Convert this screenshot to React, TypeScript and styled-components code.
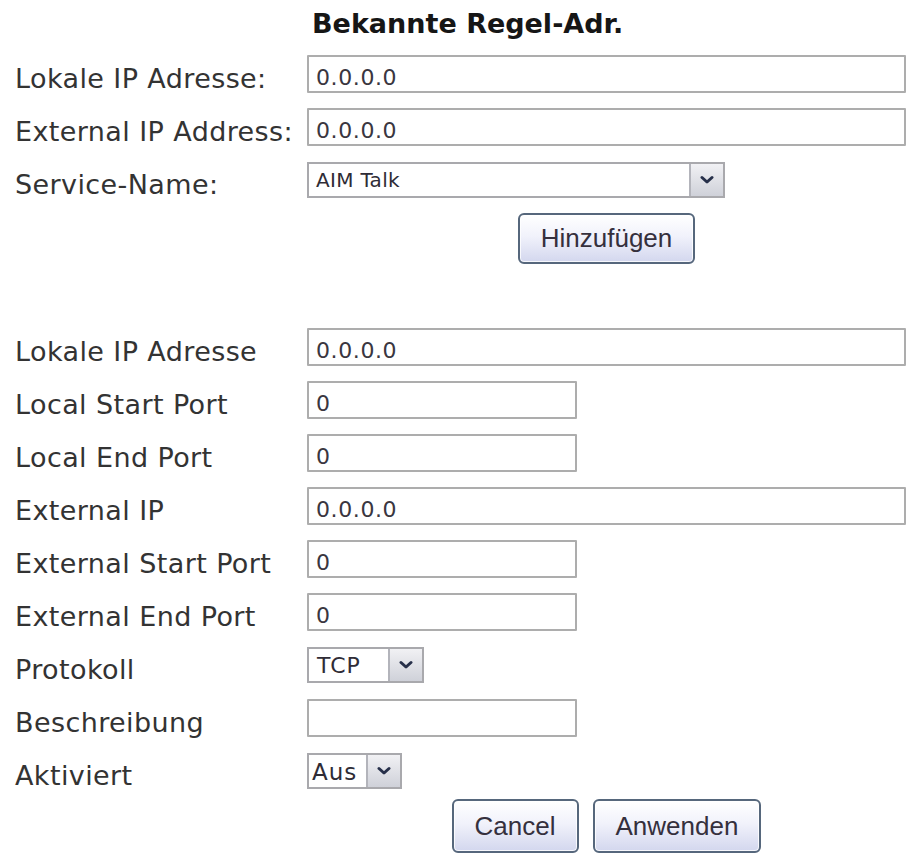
import React from "react";
import styled, { createGlobalStyle } from "styled-components";

const GlobalStyle = createGlobalStyle`
  html, body {
    margin: 0;
    padding: 0;
    background: #ffffff;
  }
  body {
    font-family: "DejaVu Sans", Verdana, sans-serif;
    color: #333333;
  }
`;

const LABEL_COL = 292;
const FIELD_COL = 599;

const Page = styled.div`
  padding: 6px 8px 0 15px;
  width: ${LABEL_COL + FIELD_COL}px;
`;

const Title = styled.h2`
  margin: 0 0 5px;
  height: 36px;
  line-height: 36px;
  padding-left: 297px;
  font-family: "DejaVu Sans", Verdana, sans-serif;
  font-size: 27px;
  font-weight: bold;
  color: #161616;
`;

const FormGrid = styled.div<{ $top?: number }>`
  display: grid;
  grid-template-columns: ${LABEL_COL}px ${FIELD_COL}px;
  grid-auto-rows: 53px;
  align-items: center;
  margin-top: ${(p) => p.$top ?? 0}px;
`;

const Label = styled.label`
  padding-top: 9px;
  font-size: 27px;
  letter-spacing: 0.4px;
  color: #333333;
  white-space: nowrap;
`;

const TextInput = styled.input<{ $wide?: boolean }>`
  box-sizing: border-box;
  width: ${(p) => (p.$wide ? FIELD_COL : 270)}px;
  height: 38px;
  margin: 0;
  padding: 7px 7px 0;
  border: 2px solid #adadad;
  border-radius: 1px;
  background: #ffffff;
  font-family: "DejaVu Sans", Verdana, sans-serif;
  font-size: 22px;
  letter-spacing: 0.6px;
  color: #3a3640;
  outline: none;
`;

const SelectBox = styled.div<{ $width: number }>`
  box-sizing: border-box;
  display: flex;
  align-items: stretch;
  width: ${(p) => p.$width}px;
  height: 36px;
  border: 2px solid #a9a9ad;
  background: #ffffff;
`;

const SelectValue = styled.span<{ $size: number; $pad: number }>`
  flex: 1;
  padding: 5px 0 0 ${(p) => p.$pad}px;
  font-size: ${(p) => p.$size}px;
  line-height: 1.1;
  letter-spacing: ${(p) => (p.$size > 21 ? 1 : 0.3)}px;
  color: #2f2c36;
  white-space: nowrap;
  overflow: hidden;
`;

const ArrowBox = styled.span`
  box-sizing: border-box;
  display: flex;
  align-items: center;
  justify-content: center;
  width: 34px;
  border-left: 2px solid #b3b4bb;
  background: linear-gradient(#f1f1f4, #cfd1d9);
`;

/* Buttons sit centred under the field column */
const ActionBar = styled.div<{ $top: number }>`
  display: flex;
  justify-content: center;
  gap: 14px;
  width: ${FIELD_COL}px;
  margin: ${(p) => p.$top}px 0 0 ${LABEL_COL}px;
`;

const Button = styled.button<{ $height?: number }>`
  box-sizing: border-box;
  height: ${(p) => p.$height ?? 54}px;
  padding: 0 21px;
  border: 2px solid #56677c;
  border-radius: 6px;
  background: linear-gradient(#ffffff 0%, #f1f2fb 45%, #d3d7ee 100%);
  box-shadow: inset 0 0 0 1px rgba(255, 255, 255, 0.8);
  font-family: "Liberation Sans", Arial, sans-serif;
  font-size: 26px;
  color: #35303d;
  cursor: pointer;
`;

const Chevron = () => (
  <svg width="14" height="10" viewBox="0 0 14 10" aria-hidden="true">
    <path
      d="M2 2.5 L7 7 L12 2.5"
      fill="none"
      stroke="#27304a"
      strokeWidth="3"
      strokeLinecap="round"
      strokeLinejoin="round"
    />
  </svg>
);

type SelectProps = { value: string; width: number; size?: number; pad?: number };

const Select = ({ value, width, size = 20, pad = 7 }: SelectProps) => (
  <SelectBox $width={width} role="combobox" aria-label={value}>
    <SelectValue $size={size} $pad={pad}>
      {value}
    </SelectValue>
    <ArrowBox>
      <Chevron />
    </ArrowBox>
  </SelectBox>
);

export default function App() {
  return (
    <>
      <GlobalStyle />
      <Page>
        <Title>Bekannte Regel-Adr.</Title>
        <FormGrid>
          <Label>Lokale IP Adresse:</Label>
          <TextInput $wide defaultValue="0.0.0.0" />
          <Label>External IP Address:</Label>
          <TextInput $wide defaultValue="0.0.0.0" />
          <Label>Service-Name:</Label>
          <Select value="AIM Talk" width={418} />
        </FormGrid>
        <ActionBar $top={7}>
          <Button $height={51}>Hinzufügen</Button>
        </ActionBar>

        <FormGrid $top={56}>
          <Label>Lokale IP Adresse</Label>
          <TextInput $wide defaultValue="0.0.0.0" />
          <Label>Local Start Port</Label>
          <TextInput defaultValue="0" />
          <Label>Local End Port</Label>
          <TextInput defaultValue="0" />
          <Label>External IP</Label>
          <TextInput $wide defaultValue="0.0.0.0" />
          <Label>External Start Port</Label>
          <TextInput defaultValue="0" />
          <Label>External End Port</Label>
          <TextInput defaultValue="0" />
          <Label>Protokoll</Label>
          <Select value="TCP" width={117} size={22} pad={8} />
          <Label>Beschreibung</Label>
          <TextInput defaultValue="" />
          <Label>Aktiviert</Label>
          <Select value="Aus" width={95} size={23} pad={3} />
        </FormGrid>
        <ActionBar $top={2}>
          <Button>Cancel</Button>
          <Button>Anwenden</Button>
        </ActionBar>
      </Page>
    </>
  );
}
